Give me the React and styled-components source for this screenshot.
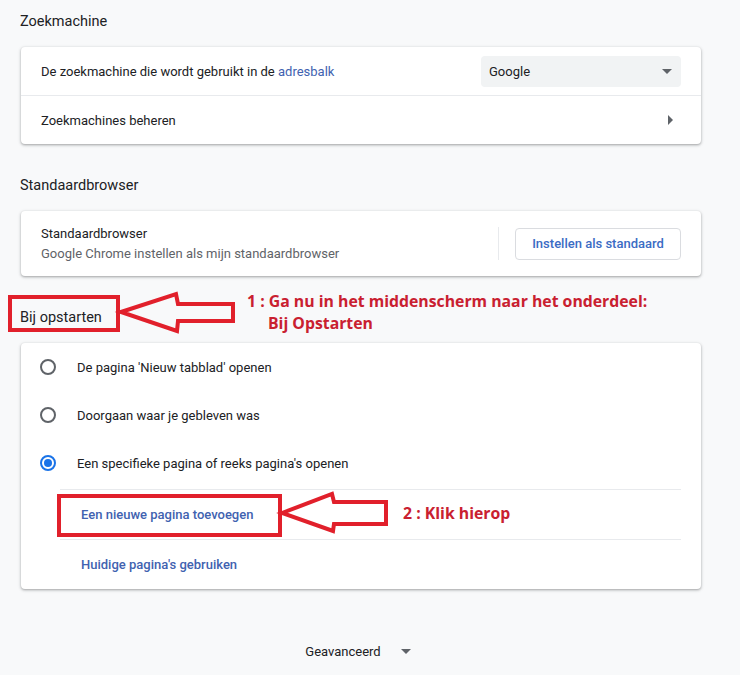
import styled, { createGlobalStyle } from "styled-components"

const GlobalStyle = createGlobalStyle`
  html, body {
    margin: 0;
    padding: 0;
    background: #f8f9fa;
    font-family: Roboto, "Liberation Sans", sans-serif;
    color: #202124;
  }
`

const Page = styled.div`
  position: relative;
  width: 740px;
  height: 675px;
  overflow: hidden;
`

const Main = styled.main`
  width: 680px;
  margin-left: 21px;
  padding-top: 12px;
  display: flex;
  flex-direction: column;
`

const SectionTitle = styled.h2`
  margin: ${p => (p.$first ? "0" : "32px")} 0 15px -1px;
  font-size: 14.5px;
  font-weight: 400;
  line-height: 20px;
  color: #202124;
`

const Card = styled.section`
  background: #fff;
  border-radius: 4px;
  box-shadow: 0 1px 2px rgba(60, 64, 67, 0.3), 0 1px 3px 1px rgba(60, 64, 67, 0.15);
`

const Row = styled.div`
  display: flex;
  align-items: center;
  justify-content: space-between;
  min-height: ${p => p.$h || 48}px;
  padding: 0 20px;
  font-size: 13px;
  border-top: ${p => (p.$divider ? "1px solid #e8eaed" : "none")};
`

const Link = styled.span`
  color: #4162b0;
`

const Select = styled.div`
  width: 200px;
  height: 31px;
  box-sizing: border-box;
  background: #f1f3f4;
  border-radius: 4px;
  display: flex;
  align-items: center;
  justify-content: space-between;
  padding: 0 9px 0 8px;
  font-size: 13px;
  color: #202124;
`

const Caret = styled.span`
  width: 0;
  height: 0;
  border-left: 5px solid transparent;
  border-right: 5px solid transparent;
  border-top: 5px solid #5f6368;
`

const SubArrow = styled.span`
  width: 0;
  height: 0;
  margin-right: 8px;
  border-top: 5px solid transparent;
  border-bottom: 5px solid transparent;
  border-left: 5px solid #5f6368;
`

const TwoLine = styled.div`
  display: flex;
  flex-direction: column;
  line-height: 20px;
`

const Secondary = styled.span`
  color: #5f6368;
`

const Actions = styled.div`
  display: flex;
  align-items: center;
  gap: 16px;
`

const Separator = styled.span`
  width: 1px;
  height: 33px;
  background: #e8eaed;
`

const Button = styled.button`
  width: 166px;
  height: 32px;
  background: #fff;
  border: 1px solid #dadce0;
  border-radius: 4px;
  font-family: Roboto, "Liberation Sans", sans-serif;
  font-size: 13px;
  font-weight: 500;
  color: #3b6cc4;
  cursor: pointer;
`

const RadioRow = styled.label`
  display: flex;
  align-items: center;
  height: 48px;
  padding-left: 19px;
  font-size: 13px;
  gap: 21px;
`

const Radio = styled.span`
  width: 16px;
  height: 16px;
  box-sizing: border-box;
  border-radius: 50%;
  border: 2px solid ${p => (p.$checked ? "#1a73e8" : "#5f6368")};
  display: flex;
  align-items: center;
  justify-content: center;
  &::after {
    content: "";
    width: 8px;
    height: 8px;
    border-radius: 50%;
    background: ${p => (p.$checked ? "#1a73e8" : "transparent")};
  }
`

const SubList = styled.div`
  margin: 2px 20px 0 39px;
`

const SubItem = styled.div`
  height: 49px;
  display: flex;
  align-items: center;
  padding-left: 21px;
  border-top: 1px solid #e8eaed;
  font-size: 13px;
  font-weight: 500;
  color: #4162b0;
`

const Advanced = styled.div`
  margin-top: 48px;
  height: 28px;
  display: flex;
  align-items: center;
  justify-content: center;
  gap: 20px;
  padding-right: 6px;
  font-size: 13px;
  color: #202124;
`

const Highlight = styled.div`
  position: absolute;
  box-sizing: border-box;
  border: 4.5px solid #e1202b;
  left: ${p => p.$x}px;
  top: ${p => p.$y}px;
  width: ${p => p.$w}px;
  height: ${p => p.$h}px;
`

const ArrowSvg = styled.svg`
  position: absolute;
  overflow: visible;
  left: 0;
  top: 0;
`

const Note = styled.div`
  position: absolute;
  left: ${p => p.$x}px;
  top: ${p => p.$y}px;
  font-family: "Open Sans", Lato, sans-serif;
  font-weight: 700;
  font-size: 15.8px;
  line-height: 22px;
  color: #c92030;
  white-space: nowrap;
`

const Indent = styled.span`
  display: block;
  padding-left: 21px;
`

function Arrow({ tip, headX, headTop, headBot, shaftTop, shaftBot, endX }) {
  const pts = [
    [tip[0], tip[1]],
    [headX, headTop],
    [headX + 2, shaftTop],
    [endX, shaftTop],
    [endX, shaftBot],
    [headX + 2, shaftBot],
    [headX + 1, headBot],
  ]
  return (
    <ArrowSvg width="740" height="675">
      <polygon
        points={pts.map(p => p.join(",")).join(" ")}
        fill="none"
        stroke="#e1202b"
        strokeWidth="4"
        strokeLinejoin="miter"
      />
    </ArrowSvg>
  )
}

export default function App() {
  return (
    <Page>
      <GlobalStyle />
      <Main>
        <SectionTitle $first>Zoekmachine</SectionTitle>
        <Card>
          <Row>
            <span>
              De zoekmachine die wordt gebruikt in de <Link>adresbalk</Link>
            </span>
            <Select>
              Google
              <Caret />
            </Select>
          </Row>
          <Row $divider>
            <span>Zoekmachines beheren</span>
            <SubArrow />
          </Row>
        </Card>

        <SectionTitle>Standaardbrowser</SectionTitle>
        <Card>
          <Row $h={65}>
            <TwoLine>
              <span>Standaardbrowser</span>
              <Secondary>Google Chrome instellen als mijn standaardbrowser</Secondary>
            </TwoLine>
            <Actions>
              <Separator />
              <Button>Instellen als standaard</Button>
            </Actions>
          </Row>
        </Card>

        <SectionTitle>Bij opstarten</SectionTitle>
        <Card>
          <RadioRow>
            <Radio />
            De pagina 'Nieuw tabblad' openen
          </RadioRow>
          <RadioRow>
            <Radio />
            Doorgaan waar je gebleven was
          </RadioRow>
          <RadioRow>
            <Radio $checked />
            Een specifieke pagina of reeks pagina's openen
          </RadioRow>
          <SubList>
            <SubItem>Een nieuwe pagina toevoegen</SubItem>
            <SubItem>Huidige pagina's gebruiken</SubItem>
          </SubList>
        </Card>

        <Advanced>
          <span>Geavanceerd</span>
          <Caret />
        </Advanced>
      </Main>

      <Highlight $x={8} $y={295} $w={112} $h={37} />
      <Arrow tip={[121, 312]} headX={176} headTop={294} headBot={331} shaftTop={304} shaftBot={321} endX={233} />
      <Note $x={247} $y={290}>
        1 : Ga nu in het middenscherm naar het onderdeel:
        <Indent>Bij Opstarten</Indent>
      </Note>

      <Highlight $x={57} $y={494} $w={225} $h={43} />
      <Arrow tip={[282, 513]} headX={332} headTop={494} headBot={531} shaftTop={502} shaftBot={524} endX={386} />
      <Note $x={403} $y={502}>2 : Klik hierop</Note>
    </Page>
  )
}
